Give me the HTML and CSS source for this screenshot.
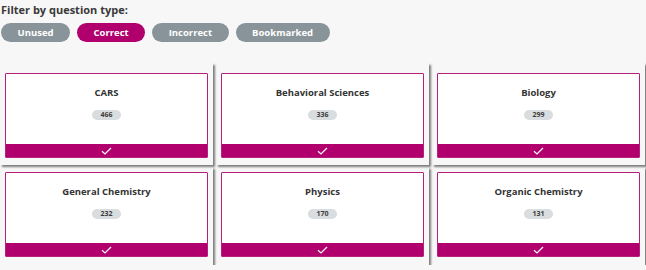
FILE: index.html
```html
<!DOCTYPE html>
<html>
<head>
<meta charset="utf-8">
<link rel="stylesheet" href="styles.css">
</head>
<body>
<div class="filter">
  <div class="filter-title">Filter by question type:</div>
  <div class="pills">
    <span class="pill">Unused</span>
    <span class="pill active">Correct</span>
    <span class="pill">Incorrect</span>
    <span class="pill">Bookmarked</span>
  </div>
</div>
<div class="grid">
  <div class="cell first-row"><div class="card"><div class="card-body"><div class="card-title">CARS</div><span class="badge">466</span></div><div class="card-foot"><svg width="11" height="8" viewBox="0 0 11 8"><path d="M1 4.2 L4 7 L10 1" fill="none" stroke="#fff" stroke-width="1.2"/></svg></div></div></div>
  <div class="cell first-row"><div class="card"><div class="card-body"><div class="card-title">Behavioral Sciences</div><span class="badge">336</span></div><div class="card-foot"><svg width="11" height="8" viewBox="0 0 11 8"><path d="M1 4.2 L4 7 L10 1" fill="none" stroke="#fff" stroke-width="1.2"/></svg></div></div></div>
  <div class="cell first-row"><div class="card"><div class="card-body"><div class="card-title">Biology</div><span class="badge">299</span></div><div class="card-foot"><svg width="11" height="8" viewBox="0 0 11 8"><path d="M1 4.2 L4 7 L10 1" fill="none" stroke="#fff" stroke-width="1.2"/></svg></div></div></div>
  <div class="cell"><div class="card"><div class="card-body"><div class="card-title">General Chemistry</div><span class="badge">232</span></div><div class="card-foot"><svg width="11" height="8" viewBox="0 0 11 8"><path d="M1 4.2 L4 7 L10 1" fill="none" stroke="#fff" stroke-width="1.2"/></svg></div></div></div>
  <div class="cell"><div class="card"><div class="card-body"><div class="card-title">Physics</div><span class="badge">170</span></div><div class="card-foot"><svg width="11" height="8" viewBox="0 0 11 8"><path d="M1 4.2 L4 7 L10 1" fill="none" stroke="#fff" stroke-width="1.2"/></svg></div></div></div>
  <div class="cell"><div class="card"><div class="card-body"><div class="card-title">Organic Chemistry</div><span class="badge">131</span></div><div class="card-foot"><svg width="11" height="8" viewBox="0 0 11 8"><path d="M1 4.2 L4 7 L10 1" fill="none" stroke="#fff" stroke-width="1.2"/></svg></div></div></div>
</div>
</body>
</html>
```
FILE: styles.css
```css
html, body {
  margin: 0;
  padding: 0;
  background: #f7f7f7;
  font-family: "Open Sans", "Noto Sans", sans-serif;
  color: #333;
}
.filter {
  padding: 2px 0 0 1px;
}
.filter-title {
  font-size: 11px;
  font-weight: 700;
  line-height: 15px;
  color: #3a3a3a;
}
.pills {
  display: flex;
  gap: 7px;
  margin-top: 6px;
}
.pill {
  display: inline-block;
  height: 19px;
  line-height: 19px;
  padding: 0 16.5px;
  border-radius: 10px;
  background: #89949a;
  color: #fff;
  font-size: 9.5px;
  font-weight: 700;
}
.pill.active {
  background: #b1006e;
}
.grid {
  display: grid;
  grid-template-columns: 213px 213px 213px;
  column-gap: 3px;
  row-gap: 2px;
  margin-top: 21px;
}
.cell {
  padding: 5px 5px 8px 5px;
  box-shadow: 2px 2px 2px rgba(0,0,0,0.5);
}
.cell.first-row {
  padding-top: 10px;
  padding-bottom: 7px;
}
.card {
  border: 1.5px solid #b5207a;
  background: #fff;
  border-radius: 1px;
  display: flex;
  flex-direction: column;
  height: 85px;
  box-sizing: border-box;
}
.card-body {
  flex: 1;
  text-align: center;
  padding-top: 12px;
}
.card-title {
  font-size: 9.5px;
  font-weight: 700;
  color: #333;
  line-height: 14px;
}
.badge {
  display: inline-block;
  margin-top: 6px;
  height: 10px;
  line-height: 10px;
  padding: 0 8px;
  border-radius: 5px;
  background: #dadddf;
  font-size: 7px;
  font-weight: 700;
  color: #3c3c3c;
}
.card-foot {
  height: 13px;
  background: #b1006e;
  display: flex;
  align-items: center;
  justify-content: center;
}
.card-foot svg {
  display: block;
}
```
